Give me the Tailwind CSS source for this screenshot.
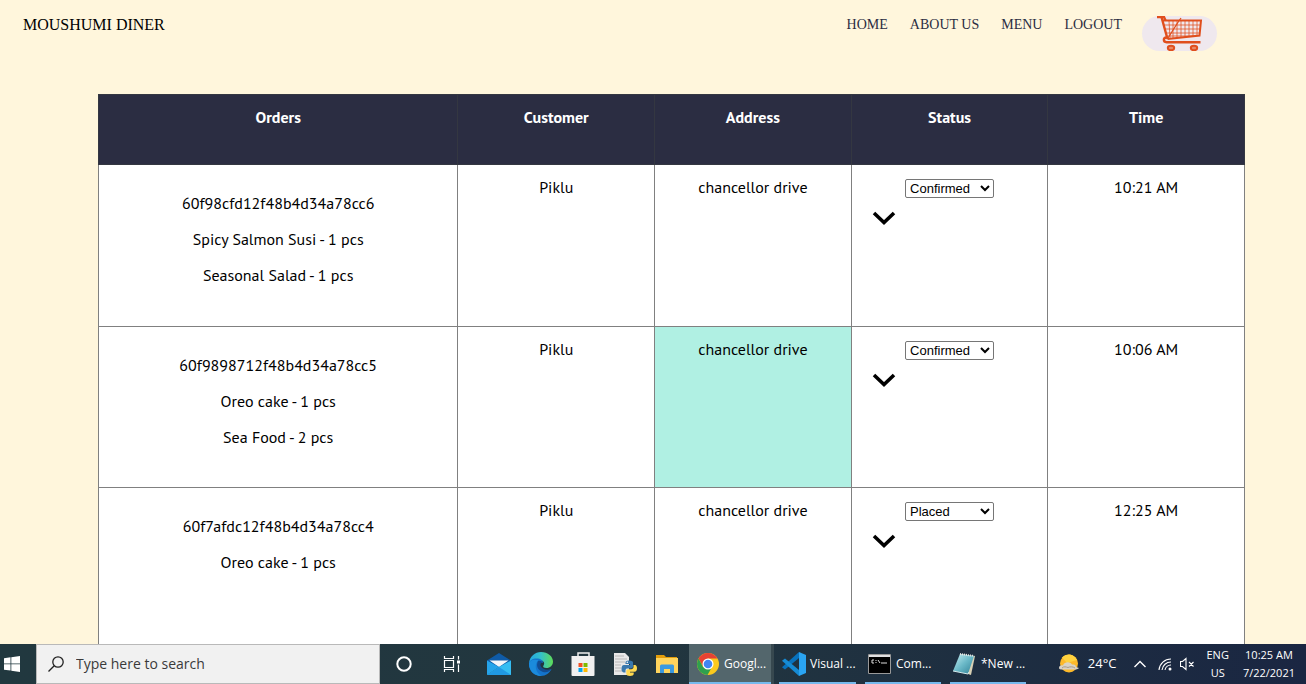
<!DOCTYPE html>
<html lang="en">
<head>
<meta charset="utf-8">
<meta name="viewport" content="width=device-width, initial-scale=1">
<title>Moushumi Diner - Orders</title>
<script src="https://cdn.jsdelivr.net/npm/@tailwindcss/browser@4"></script>
</head>
<body class="flex h-screen flex-col overflow-hidden bg-[#fff6dc] font-['PT_Sans','Noto_Sans',sans-serif] text-black">
<header class="flex shrink-0 items-start justify-between pt-4 pr-[89px] pb-[43px] pl-[23px] font-['Liberation_Serif',serif]">
  <a href="#" class="text-base leading-[18px]">MOUSHUMI DINER</a>
  <nav class="flex gap-5 text-sm leading-[18px] text-[#2b2d42]" aria-label="Main">
    <div class="flex gap-[22px]">
      <a href="#">HOME</a>
      <a href="#">ABOUT US</a>
      <a href="#">MENU</a>
      <a href="#">LOGOUT</a>
    </div>
    <a href="#" aria-label="Cart" class="flex h-[35px] w-[75px] justify-center rounded-full bg-[#efe8ee]">
      <svg class="h-[35px] w-[46px]" viewBox="0 0 46 35" fill="none" stroke="#e04e1d">
        <path d="M0 1h7l1.500 3.500" stroke-width="2.400"/>
        <path d="M4.500 1l6 22" stroke-width="2.400"/>
        <path d="M6 4.500h38l-1.500 15-32 3.500" stroke-width="2"/>
        <path d="M7 9h36.500M8 13h35M9 17h34M9.500 20h27M12 5l1 17M16 5v17M20 5v17M24 5v16M28 5v16M32 5v15M36 5v15M40 5v15" stroke-width="1" opacity=".75"/>
        <path d="M24 2l-3.500 5L11 22" stroke-width="1.300"/>
        <path d="M9.500 21.500c-3.500 0-3.500 4.700 0 4.700h34" stroke-width="2.400"/>
        <ellipse cx="14" cy="32" rx="3.200" ry="2.200" stroke-width="2" fill="#e88a68"/>
        <ellipse cx="37" cy="32" rx="3.200" ry="2.200" stroke-width="2" fill="#e88a68"/>
      </svg>
    </a>
  </nav>
</header>

<main class="min-h-0 flex-1 overflow-hidden pr-[61px] pl-[98px]">
  <table class="w-full table-fixed border-collapse bg-white text-center text-base leading-6">
    <colgroup><col><col class="w-[17.16%]"><col class="w-[17.16%]"><col class="w-[17.16%]"><col class="w-[17.16%]"></colgroup>
    <thead>
      <tr class="h-[70px] bg-[#2b2d42] align-top text-white">
        <th class="border border-[#343741] pt-[10px] font-bold">Orders</th>
        <th class="border border-[#343741] pt-[10px] font-bold">Customer</th>
        <th class="border border-[#343741] pt-[10px] font-bold">Address</th>
        <th class="border border-[#343741] pt-[10px] font-bold">Status</th>
        <th class="border border-[#343741] pt-[10px] font-bold">Time</th>
      </tr>
    </thead>
    <tbody>
      <tr class="h-[162px] align-top">
        <td class="border border-[#808080] px-3 pt-[26px]"><div class="flex flex-col gap-3"><p>60f98cfd12f48b4d34a78cc6</p><p>Spicy Salmon Susi - 1 pcs</p><p>Seasonal Salad - 1 pcs</p></div></td>
        <td class="border border-[#808080] px-3 pt-[10px]">Piklu</td>
        <td class="border border-[#808080] px-3 pt-[10px]">chancellor drive</td>
        <td class="border border-[#808080] px-5 pt-[14px]">
          <div class="flex flex-col items-center gap-3">
            <select aria-label="Status of order 60f98cfd12f48b4d34a78cc6" class="h-[19px] w-[89px] rounded-xs border border-[#767676] bg-white font-['Liberation_Sans',sans-serif] text-[13px] leading-4"><option>Confirmed</option><option>Placed</option></select>
            <svg class="h-4 w-6 self-start" viewBox="0 0 24 16" fill="none" stroke="#000" stroke-width="3.600" aria-hidden="true"><path d="M2 3l10 9.500L22 3"/></svg>
          </div>
        </td>
        <td class="border border-[#808080] px-3 pt-[10px]">10:21 AM</td>
      </tr>
      <tr class="h-[161px] align-top">
        <td class="border border-[#808080] px-3 pt-[26px]"><div class="flex flex-col gap-3"><p>60f9898712f48b4d34a78cc5</p><p>Oreo cake - 1 pcs</p><p>Sea Food - 2 pcs</p></div></td>
        <td class="border border-[#808080] px-3 pt-[10px]">Piklu</td>
        <td class="border border-[#808080] bg-[#b0f0e3] px-3 pt-[10px]">chancellor drive</td>
        <td class="border border-[#808080] px-5 pt-[14px]">
          <div class="flex flex-col items-center gap-3">
            <select aria-label="Status of order 60f9898712f48b4d34a78cc5" class="h-[19px] w-[89px] rounded-xs border border-[#767676] bg-white font-['Liberation_Sans',sans-serif] text-[13px] leading-4"><option>Confirmed</option><option>Placed</option></select>
            <svg class="h-4 w-6 self-start" viewBox="0 0 24 16" fill="none" stroke="#000" stroke-width="3.600" aria-hidden="true"><path d="M2 3l10 9.500L22 3"/></svg>
          </div>
        </td>
        <td class="border border-[#808080] px-3 pt-[10px]">10:06 AM</td>
      </tr>
      <tr class="h-[161px] align-top">
        <td class="border border-[#808080] px-3 pt-[26px]"><div class="flex flex-col gap-3"><p>60f7afdc12f48b4d34a78cc4</p><p>Oreo cake - 1 pcs</p></div></td>
        <td class="border border-[#808080] px-3 pt-[10px]">Piklu</td>
        <td class="border border-[#808080] px-3 pt-[10px]">chancellor drive</td>
        <td class="border border-[#808080] px-5 pt-[14px]">
          <div class="flex flex-col items-center gap-3">
            <select aria-label="Status of order 60f7afdc12f48b4d34a78cc4" class="h-[19px] w-[89px] rounded-xs border border-[#767676] bg-white font-['Liberation_Sans',sans-serif] text-[13px] leading-4"><option>Placed</option><option>Confirmed</option></select>
            <svg class="h-4 w-6 self-start" viewBox="0 0 24 16" fill="none" stroke="#000" stroke-width="3.600" aria-hidden="true"><path d="M2 3l10 9.500L22 3"/></svg>
          </div>
        </td>
        <td class="border border-[#808080] px-3 pt-[10px]">12:25 AM</td>
      </tr>
    </tbody>
  </table>
</main>

<footer class="flex h-10 shrink-0 bg-linear-to-r from-[#21383f] via-[#22363f] to-[#1a2642] font-['Open_Sans',sans-serif] text-xs whitespace-nowrap text-white">
  <button type="button" aria-label="Start" class="flex w-9 items-center pl-1">
    <svg class="size-4" viewBox="0 0 16 16" fill="#fff"><path d="M0 2.200l6.500-.9v6.200H0zM7.300 1.200L16 0v7.500H7.300zM0 8.300h6.500v6.300L0 13.700zM7.300 8.300H16V16l-8.700-1.200z"/></svg>
  </button>
  <label class="flex w-[344px] items-center gap-3 border border-[#b9b9b9] bg-[#f1f1f1] pl-[11px]">
    <svg class="size-4 shrink-0" viewBox="0 0 16 16" fill="none" stroke="#222" stroke-width="1.300"><circle cx="10" cy="6" r="5.200"/><path d="M6.200 9.800L.5 15.500"/></svg>
    <input type="text" aria-label="Search" placeholder="Type here to search" class="min-w-0 flex-1 bg-transparent text-sm text-black outline-none placeholder:text-[#3a3a3a]">
  </label>
  <div class="flex">
    <button type="button" aria-label="Cortana" class="flex w-12 items-center justify-center">
      <svg class="size-4" viewBox="0 0 16 16" fill="none" stroke="#fff" stroke-width="2"><circle cx="8" cy="8" r="6.700"/></svg>
    </button>
    <button type="button" aria-label="Task view" class="flex w-12 items-center justify-center">
      <svg class="h-4 w-[18px]" viewBox="0 0 18 16" fill="none" stroke="#fff" stroke-width="1.200"><path d="M1.500 0v2.500h9V0M1.500 16v-2.500h9V16M1.500 4.500h9v7h-9zM15.500 0v3.500M15.500 8.500V16"/><path d="M14 4.500h3v3h-3z" fill="#fff" stroke="none"/></svg>
    </button>
    <button type="button" aria-label="Mail" class="flex w-[46px] items-center justify-center">
      <svg class="size-6" viewBox="0 0 24 24"><path d="M0 8.500L12 1l12 7.500V15H0z" fill="#0f5ba7"/><path d="M2.500 8.500h19L12 15z" fill="#f3f6fa"/><path d="M0 8.500l12 6.500L0 23z" fill="#25a4ea"/><path d="M24 8.500V23H0l12-8z" fill="#35bdf2"/><path d="M0 23l12-8 12 8z" fill="#2099e3"/></svg>
    </button>
    <button type="button" aria-label="Edge" class="flex w-[38px] items-center justify-center">
      <svg class="size-6" viewBox="0 0 24 24"><defs><linearGradient id="edgeTop" x1="0" x2="1"><stop offset="0" stop-color="#22a5e2"/><stop offset=".5" stop-color="#35c1c9"/><stop offset="1" stop-color="#5edc57"/></linearGradient></defs><path d="M0 11C1 4 6 0 12 0c7 0 12 4.500 12 9.500 0 4-3 6.500-6.500 6.500-3 0-4-1.300-3-2.500 2-3-.5-5.500-4-5.500C5 8 1 10 0 11z" fill="url(#edgeTop)"/><path d="M0 12c0-4 4.500-6 9-5.500 3 .3 5 2.200 5 4.500-5-2.500-8 6 2 7.500 2.500.3 5-.5 6.500-1.500C20.500 21 17 24 12 24 5 24 0 18.500 0 12z" fill="#1474cc"/><path d="M9.500 8.200C5 12 6 20 12.500 24 5 24 0 18.500 0 12c0-3 4-5.500 9.500-3.800z" fill="#1b8bdc"/><path d="M9 9c-2 4-1 9 5 11 4 1 7-1 8.500-3-3 1-6 1-8.500-.5-3-1.700-3.500-5-.5-6.500C12 9 10.500 8.500 9 9z" fill="#124c91"/></svg>
    </button>
    <button type="button" aria-label="Microsoft Store" class="flex w-[46px] items-center justify-center">
      <svg class="size-6" viewBox="0 0 24 24"><path d="M7 6V1h11v5" fill="none" stroke="#eee" stroke-width="1.500"/><path d="M.5 4h23v19q0 1-1 1h-21q-1 0-1-1z" fill="#f0f0f0"/><path d="M7.500 11h4v4h-4z" fill="#f25022"/><path d="M12.500 11h4v4h-4z" fill="#7fba00"/><path d="M7.500 16h4v4h-4z" fill="#00a4ef"/><path d="M12.500 16h4v4h-4z" fill="#ffb900"/></svg>
    </button>
    <button type="button" aria-label="Python" class="flex w-[38px] items-center justify-center">
      <svg class="size-6" viewBox="0 0 24 24"><path d="M1 1h11l4 4v18H1z" fill="#e8e8e8"/><path d="M2 4h9M2 7h12M2 10h10M2 13h6M2 16h6M2 19h7" stroke="#b8b8b8"/><path d="M16 8.500c-3 0-3.500 1-3.500 2V12H17v1h-6c-2 0-2.500 2-2.500 4s1 3.500 2.500 3.500h1.500v-2c0-1.500 1-2 2-2h3.500c1 0 2-.7 2-2v-4c0-1-1-2-4-2z" fill="#3a78ad"/><path d="M20.500 13v2c0 1.300-1 2.200-2.200 2.200H15c-1 0-1.700.8-1.700 1.800v3c0 1.300 1.500 2 3.700 2s3.700-.7 3.700-2v-1.500H17v-.8h4.500c1.700 0 2.500-1.500 2.500-3.500 0-1.800-.8-3.200-2-3.200z" fill="#ffd94f"/><circle cx="14.300" cy="10.300" r=".8" fill="#fff"/></svg>
    </button>
    <button type="button" aria-label="File Explorer" class="flex w-[45px] items-center justify-center">
      <svg class="size-[22px]" viewBox="0 0 22 22"><path d="M0 2h8l2 2h11v4H0z" fill="#e39d0b"/><path d="M0 5h22v15H0z" fill="#ffd45d"/><path d="M4 20v-7q0-1.500 1.500-1.500h11q1.500 0 1.500 1.500v7h-4v-4H8v4z" fill="#3b99df"/></svg>
    </button>
  </div>
  <div class="flex">
    <button type="button" class="mr-[5px] flex w-[85px] items-center gap-1 border-r-[3px] border-[#37484f] bg-[#53666c] pl-[7px] shadow-[inset_0_-2px_#76b9ed]">
      <svg class="size-6 shrink-0" viewBox="0 0 24 24"><circle cx="12" cy="12" r="11" fill="#fbc91d"/><path d="M2.500 6.500A11 11 0 0 1 21.500 6.500H12l-5 8z" fill="#e64234"/><path d="M2.500 6.500A11 11 0 0 0 11.500 23l4.500-8-4 2-5-2z" fill="#2fa04e"/><circle cx="12" cy="12" r="5.500" fill="#fff"/><circle cx="12" cy="12" r="4.300" fill="#4285f4"/></svg>
      <span>Googl...</span>
    </button>
    <button type="button" class="mr-[9px] flex w-[77px] items-center gap-1 pl-[3px] shadow-[inset_0_-2px_#76b9ed]">
      <svg class="size-6 shrink-0" viewBox="0 0 24 24"><path d="M17 0v6L3 17.500l-3-2.300z" fill="#0872bd"/><path d="M17 24v-6L3 6.500 0 8.800z" fill="#168bd4"/><path d="M17 0L24 3v18l-7 3z" fill="#2aa4f2"/></svg>
      <span>Visual ...</span>
    </button>
    <button type="button" class="mr-[9px] flex w-[76px] items-center gap-[5px] pl-[3px] shadow-[inset_0_-2px_#76b9ed]">
      <svg class="h-5 w-[23px] shrink-0" viewBox="0 0 23 20"><path d="M.5.500h22v19H.5z" fill="#000" stroke="#999"/><path d="M1 1h21v2H1z" fill="#e1e1e1"/><path d="M6 6H4v3h2M8 6v1M8 8v1M10 6l2 3M13 9h6" fill="none" stroke="#ddd"/></svg>
      <span>Com...</span>
    </button>
    <button type="button" class="flex w-[76px] items-center gap-[5px] pl-[3px] shadow-[inset_0_-2px_#76b9ed]">
      <svg class="h-[22px] w-[23px] shrink-0" viewBox="0 0 23 22"><defs><linearGradient id="note" x1="0" x2="1" y2="1"><stop offset="0" stop-color="#c9eff2"/><stop offset=".5" stop-color="#6bb9c8"/><stop offset="1" stop-color="#2f7f95"/></linearGradient></defs><path d="M8 1l14 2-4 19-3-1z" fill="#d8d1b4"/><path d="M7 1l14 2-6 18L0 18z" fill="url(#note)"/><path d="M7 1l14 2" stroke="#e8e8e8" stroke-width="2" stroke-dasharray="1 1"/><path d="M0 18l15 3 1-2" fill="none" stroke="#d5e9ec"/></svg>
      <span>*New ...</span>
    </button>
  </div>
  <div class="ml-auto flex items-center pr-[11px]">
    <button type="button" class="flex items-center gap-[9px] text-[13px]">
      <svg class="size-5" viewBox="0 0 20 20"><circle cx="10" cy="9.500" r="9" fill="#fdb92a"/><path d="M3 3.500A9 9 0 0 1 18 6L8 9z" fill="#ffd23f"/><path d="M0 14c0-2 2-3 4-2.500C5 8 11 7 13 10.500c3-.5 4 1 4 2.500l3 1c-1 1.500-3 1.500-4 1.500H3c-1.500 0-3-.3-3-1.500z" fill="#d9d2c5"/><path d="M3 14c2-2 4-1 6-.5 2-1 5-1 7 .5" fill="none" stroke="#a99c87"/></svg>
      <span>24°C</span>
    </button>
    <button type="button" aria-label="Show hidden icons" class="ml-[18px]"><svg class="h-2 w-3" viewBox="0 0 12 8" fill="none" stroke="#fff" stroke-width="1.400"><path d="M.5 7L6 1.500 11.500 7"/></svg></button>
    <button type="button" aria-label="Network" class="ml-3"><svg class="size-[14px]" viewBox="0 0 14 14" fill="none" stroke="#fff" stroke-width="1.100"><path d="M1 13A12 12 0 0 1 13 2M4 13a9 9 0 0 1 9-8M7 13a6 6 0 0 1 6-5"/><circle cx="12" cy="12" r="1.500" fill="#fff" stroke="none"/></svg></button>
    <button type="button" aria-label="Muted" class="ml-2"><svg class="size-[14px]" viewBox="0 0 14 14" fill="none" stroke="#fff" stroke-width="1.100"><path d="M.5 4.500h2L6 1.500v11L2.500 9.500h-2zM9 5l4.500 4.500M13.500 5L9 9.500"/></svg></button>
    <div class="ml-3 text-center text-[11px] leading-[18px]"><p>ENG</p><p>US</p></div>
    <div class="ml-[14px] text-center text-[11px] leading-[18px]"><p>10:25 AM</p><p>7/22/2021</p></div>
  </div>
</footer>
</body>
</html>
